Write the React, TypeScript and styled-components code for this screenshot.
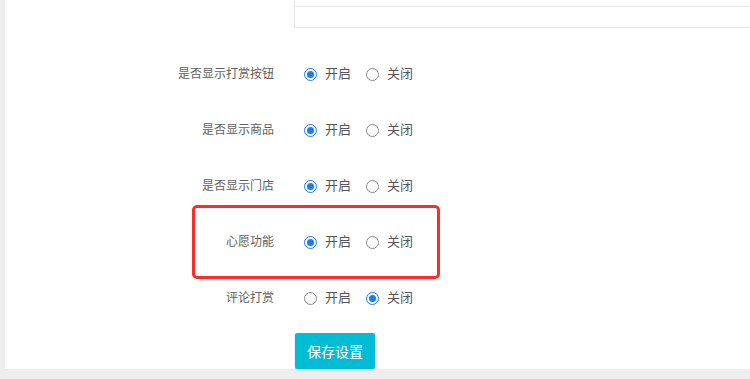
import React, { useState } from 'react';
import styled, { createGlobalStyle } from 'styled-components';

const GlobalStyle = createGlobalStyle`
  html, body {
    margin: 0;
    padding: 0;
    background: #eeeeee;
    font-family: "Noto Sans CJK SC", "Noto Sans", sans-serif;
  }
`;

const Page = styled.div`
  width: 750px;
  height: 379px;
  overflow: hidden;
  background: #eeeeee;
  padding-left: 5px;
  box-sizing: border-box;
`;

const Panel = styled.div`
  background: #fff;
  height: 369px;
  display: flex;
  flex-direction: column;
`;

const TableTail = styled.div`
  margin-left: 289px;
  border-left: 1px solid #e6e6e6;
  display: flex;
  flex-direction: column;
`;

const TableRow = styled.div`
  height: ${(props: { h: number }) => props.h}px;
  border-bottom: 1px solid #e6e6e6;
`;

const Form = styled.div`
  margin-top: 18px;
  display: flex;
  flex-direction: column;
`;

const Row = styled.div`
  position: relative;
  height: 56px;
  display: flex;
  align-items: center;
`;

const Label = styled.div`
  width: 290px;
  box-sizing: border-box;
  padding-right: 21px;
  text-align: right;
  font-size: 12px;
  color: #5f5f5f;
  margin-top: -3px;
`;

const Options = styled.div`
  display: flex;
  align-items: center;
  padding-left: 9px;
`;

const Option = styled.label`
  display: flex;
  align-items: center;
  margin-right: 15px;
  font-size: 13px;
  line-height: 16px;
  color: #555;
  cursor: pointer;
`;

const OptionText = styled.span`
  margin-top: -2px;
`;

const Dot = styled.span`
  width: 13px;
  height: 13px;
  box-sizing: border-box;
  border-radius: 50%;
  border: ${(props: { checked: boolean }) => (props.checked ? '1.5px solid #1a7cf5' : '1px solid #8a8a8a')};
  display: flex;
  align-items: center;
  justify-content: center;
  margin-right: 8px;
  &::after {
    content: '';
    width: 7px;
    height: 7px;
    border-radius: 50%;
    background: ${(props: { checked: boolean }) => (props.checked ? '#1a7cf5' : 'transparent')};
  }
`;

const Highlight = styled.div`
  position: absolute;
  left: 187px;
  top: -9px;
  width: 248px;
  height: 74px;
  box-sizing: border-box;
  border: 3px solid #ff2a2a;
  border-radius: 5px;
  pointer-events: none;
`;

const Footer = styled.div`
  margin-top: 7px;
  padding-left: 290px;
`;

const SaveButton = styled.button`
  width: 80px;
  height: 36px;
  border: 0;
  border-radius: 2px;
  background: #00bcd4;
  color: #fff;
  font-family: inherit;
  font-size: 14px;
  box-shadow: 0 1px 2px rgba(120, 60, 200, 0.25);
  cursor: pointer;
`;

const settings = [
  { key: 'reward', label: '是否显示打赏按钮', on: true },
  { key: 'goods', label: '是否显示商品', on: true },
  { key: 'store', label: '是否显示门店', on: true },
  { key: 'wish', label: '心愿功能', on: true, marked: true },
  { key: 'comment', label: '评论打赏', on: false },
];

const SettingRow = ({ label, on, marked }: { label: string; on: boolean; marked?: boolean }) => {
  const [value, setValue] = useState<boolean>(on);
  return (
    <Row>
      {marked && <Highlight />}
      <Label>{label}</Label>
      <Options>
        <Option onClick={() => setValue(true)}>
          <Dot checked={value} />
          <OptionText>开启</OptionText>
        </Option>
        <Option onClick={() => setValue(false)}>
          <Dot checked={!value} />
          <OptionText>关闭</OptionText>
        </Option>
      </Options>
    </Row>
  );
};

const App = (): JSX.Element => {
  return (
    <>
      <GlobalStyle />
      <Page>
        <Panel>
          <TableTail>
            <TableRow h={6} />
            <TableRow h={20} />
          </TableTail>
          <Form>
            {settings.map((s) => (
              <SettingRow key={s.key} label={s.label} on={s.on} marked={s.marked} />
            ))}
          </Form>
          <Footer>
            <SaveButton>保存设置</SaveButton>
          </Footer>
        </Panel>
      </Page>
    </>
  );
};

export default App;
